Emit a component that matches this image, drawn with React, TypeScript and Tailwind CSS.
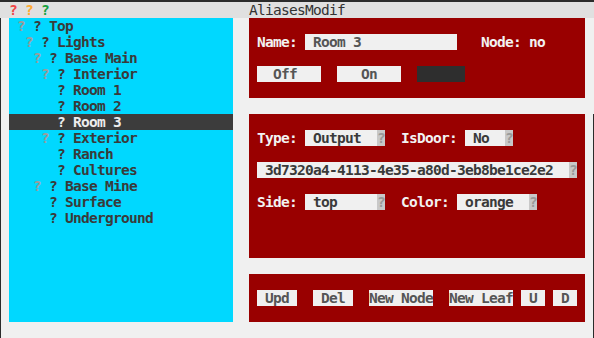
import React from "react";

type TreeRow = {
  indent: number;
  toggle: boolean;
  name: string;
  selected?: boolean;
};

const rows: TreeRow[] = [
  { indent: 1, toggle: true, name: "Top" },
  { indent: 2, toggle: true, name: "Lights" },
  { indent: 3, toggle: true, name: "Base Main" },
  { indent: 4, toggle: true, name: "Interior" },
  { indent: 4, toggle: false, name: "Room 1" },
  { indent: 4, toggle: false, name: "Room 2" },
  { indent: 4, toggle: false, name: "Room 3", selected: true },
  { indent: 4, toggle: true, name: "Exterior" },
  { indent: 4, toggle: false, name: "Ranch" },
  { indent: 4, toggle: false, name: "Cultures" },
  { indent: 3, toggle: true, name: "Base Mine" },
  { indent: 3, toggle: false, name: "Surface" },
  { indent: 3, toggle: false, name: "Underground" },
];

const Tree: React.FC = () => (
  <div className="w-[224px] h-[304px] ml-[8px] bg-[#00d8ff] flex flex-col">
    {rows.map((r) => (
      <div
        key={r.name}
        className={`h-[16px] whitespace-pre ${
          r.selected ? "bg-[#3c3c3c] text-[#ececec]" : "text-[#3a3a3a]"
        }`}
      >
        {" ".repeat(r.indent)}
        <span className={r.selected ? "text-[#ececec]" : "text-[#9c9c9c]"}>
          {r.toggle ? "?" : " "}
        </span>
        {" ? " + r.name}
      </div>
    ))}
  </div>
);

const Field: React.FC<{ w: string; text: string }> = ({ w, text }) => (
  <div className={`${w} h-[16px] bg-[#f0f0f0] text-[#555555] whitespace-pre overflow-hidden`}>
    {text}
  </div>
);

const Select: React.FC<{ w: string; text: string }> = ({ w, text }) => (
  <div className={`${w} h-[16px] bg-[#f0f0f0] text-[#3a3a3a] flex whitespace-pre`}>
    <span className="flex-1">{text}</span>
    <span className="w-[8px] bg-[#c8c8c8] text-[#9a9a9a]">?</span>
  </div>
);

const Label: React.FC<{ text: string }> = ({ text }) => (
  <span className="text-[#f2f2f2] whitespace-pre">{text}</span>
);

const Panel: React.FC<{ h: string; children: React.ReactNode }> = ({
  h,
  children,
}) => (
  <div className={`${h} bg-[#990000] px-[8px] pt-[16px] flex flex-col gap-[16px]`}>
    {children}
  </div>
);

export default function App() {
  return (
    <div
      className="w-[594px] h-[338px] bg-[#f0f0f0] border-t-2 border-[#2b2b2b] overflow-hidden font-bold text-[14.5px] tracking-[-0.73px] leading-[16px]"
      style={{ fontFamily: '"DejaVu Sans Mono", "Liberation Mono", monospace' }}
    >
      {/* title bar */}
      <div className="h-[16px] bg-[#e0e0e0] grid grid-cols-[1fr_auto_1fr] whitespace-pre">
        <div className="pl-[9px]">
          <span className="text-[#f04848]">?</span>{" "}
          <span className="text-[#ffaa33]">?</span>{" "}
          <span className="text-[#18a040]">?</span>
        </div>
        <div className="text-[#333333] font-normal">AliasesModif</div>
        <div />
      </div>

      <div className="h-[320px] flex border-l border-[#2b2b2b]">
        <Tree />
        <div className="w-[336px] ml-[16px] flex flex-col gap-[16px]">
          <Panel h="h-[80px]">
            <div className="flex h-[16px]">
              <Label text="Name: " />
              <Field w="w-[152px]" text=" Room 3" />
              <Label text="   Node: no" />
            </div>
            <div className="flex h-[16px] gap-[16px]">
              <Field w="w-[64px]" text="  Off" />
              <Field w="w-[64px]" text="   On" />
              <div className="w-[48px] h-[16px] bg-[#2e2e2e]" />
            </div>
          </Panel>

          <Panel h="h-[144px]">
            <div className="flex h-[16px]">
              <Label text="Type: " />
              <Select w="w-[80px]" text=" Output" />
              <Label text="  IsDoor: " />
              <Select w="w-[48px]" text=" No" />
            </div>
            <div className="flex h-[16px]">
              <Select w="w-[320px]" text=" 3d7320a4-4113-4e35-a80d-3eb8be1ce2e2" />
            </div>
            <div className="flex h-[16px]">
              <Label text="Side: " />
              <Select w="w-[80px]" text=" top" />
              <Label text="  Color: " />
              <Select w="w-[80px]" text=" orange" />
            </div>
          </Panel>

          <Panel h="h-[48px]">
            <div className="flex h-[16px]">
              <Field w="w-[40px]" text=" Upd" />
              <div className="w-[16px]" />
              <Field w="w-[40px]" text=" Del" />
              <div className="w-[16px]" />
              <Field w="w-[64px]" text="New Node" />
              <div className="w-[16px]" />
              <Field w="w-[64px]" text="New Leaf" />
              <div className="w-[8px]" />
              <Field w="w-[24px]" text=" U" />
              <div className="w-[8px]" />
              <Field w="w-[24px]" text=" D" />
            </div>
          </Panel>
        </div>
        <div className="flex-1" />
        <div className="w-[1px] mt-[96px] bg-[#2b2b2b]" />
      </div>
    </div>
  );
}
